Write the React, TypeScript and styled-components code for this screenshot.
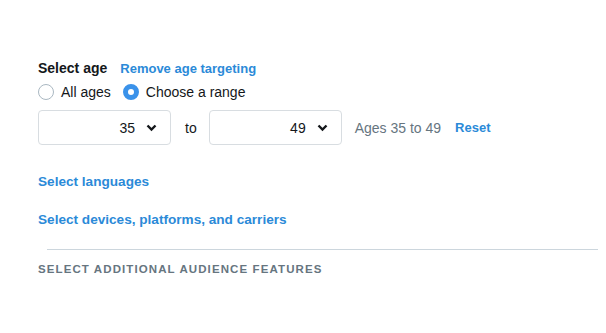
import React, { useState } from 'react'
import styled, { createGlobalStyle } from 'styled-components'

const GlobalStyle = createGlobalStyle`
  body {
    margin: 0;
    background: #fff;
    font-family: "Liberation Sans", Arial, Helvetica, sans-serif;
    color: #14171a;
  }
`

const Page = styled.div`
  width: 606px;
  height: 333px;
  padding: 60px 0 0 38px;
  box-sizing: border-box;
  overflow: hidden;
`

const HeadRow = styled.div`
  display: flex;
  align-items: baseline;
  gap: 13px;
  height: 20px;
`

const Label = styled.span`
  font-size: 14px;
  font-weight: 700;
  color: #14171a;
`

const Link = styled.a<{ $size?: number }>`
  font-size: ${p => p.$size || 13}px;
  font-weight: 700;
  color: #2b8ad8;
  text-decoration: none;
  cursor: pointer;
`

const RadioRow = styled.div`
  display: flex;
  align-items: center;
  gap: 12px;
  height: 22px;
  margin-top: 1px;
`

const RadioItem = styled.label`
  display: flex;
  align-items: center;
  gap: 7px;
  font-size: 14px;
  color: #14171a;
  cursor: pointer;
`

const Circle = styled.span<{ $on: boolean }>`
  width: 16px;
  height: 16px;
  box-sizing: border-box;
  border-radius: 50%;
  border: ${p => (p.$on ? '5px solid #3a92ea' : '1px solid #aab8c2')};
  background: #fff;
`

const RangeRow = styled.div`
  display: flex;
  align-items: center;
  margin-top: 7px;
`

const SelectBox = styled.div`
  width: 133px;
  height: 35px;
  box-sizing: border-box;
  border: 1px solid #d8dde1;
  border-radius: 4px;
  display: flex;
  align-items: center;
  justify-content: flex-end;
  padding-right: 13px;
  gap: 11px;
  font-size: 14px;
  color: #14171a;
`

const To = styled.span`
  font-size: 14px;
  color: #14171a;
  margin: 0 12px 0 14px;
`

const Summary = styled.span`
  font-size: 14px;
  color: #66757f;
  margin: 0 14px 0 13px;
`

const LinkBlock = styled.div<{ $top: number }>`
  margin-top: ${p => p.$top}px;
`

const Divider = styled.hr`
  border: 0;
  border-top: 1px solid #ccd6dd;
  margin: 21px 8px 0 9px;
`

const SectionTitle = styled.div`
  margin-top: 13px;
  font-size: 11.5px;
  font-weight: 700;
  letter-spacing: 1.1px;
  color: #66757f;
  text-transform: uppercase;
`

const Chevron = () => (
  <svg width="11" height="8" viewBox="0 0 11 8">
    <path d="M1.5 1.5 L5.5 5.5 L9.5 1.5" fill="none" stroke="#14171a" strokeWidth="2.4" />
  </svg>
)

const AgeSelect = ({ value }: { value: string }) => (
  <SelectBox>
    <span>{value}</span>
    <Chevron />
  </SelectBox>
)

export default function App() {
  const [mode, setMode] = useState<'all' | 'range'>('range')
  return (
    <Page>
      <GlobalStyle />
      <HeadRow>
        <Label>Select age</Label>
        <Link>Remove age targeting</Link>
      </HeadRow>
      <RadioRow>
        <RadioItem onClick={() => setMode('all')}>
          <Circle $on={mode === 'all'} />
          All ages
        </RadioItem>
        <RadioItem onClick={() => setMode('range')}>
          <Circle $on={mode === 'range'} />
          Choose a range
        </RadioItem>
      </RadioRow>
      <RangeRow>
        <AgeSelect value="35" />
        <To>to</To>
        <AgeSelect value="49" />
        <Summary>Ages 35 to 49</Summary>
        <Link>Reset</Link>
      </RangeRow>
      <LinkBlock $top={27}>
        <Link $size={13.6}>Select languages</Link>
      </LinkBlock>
      <LinkBlock $top={20}>
        <Link $size={13.6}>Select devices, platforms, and carriers</Link>
      </LinkBlock>
      <Divider />
      <SectionTitle>Select additional audience features</SectionTitle>
    </Page>
  )
}
